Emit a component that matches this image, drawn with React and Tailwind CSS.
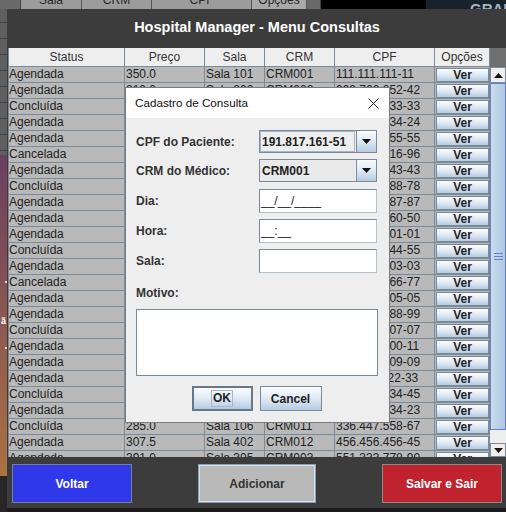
import React from "react";

const rows = [
  ["Agendada", "350.0", "Sala 101", "CRM001", "111.111.111-11"],
  ["Agendada", "210.0", "Sala 202", "CRM002", "999.760.252-42"],
  ["Concluída", "420.0", "Sala 303", "CRM003", "333.333.333-33"],
  ["Agendada", "180.0", "Sala 104", "CRM004", "424.434.434-24"],
  ["Agendada", "250.0", "Sala 205", "CRM005", "555.555.555-55"],
  ["Cancelada", "300.0", "Sala 306", "CRM006", "616.616.616-96"],
  ["Agendada", "275.0", "Sala 107", "CRM007", "343.343.343-43"],
  ["Concluída", "320.0", "Sala 208", "CRM008", "878.888.888-78"],
  ["Agendada", "290.0", "Sala 309", "CRM009", "787.787.787-87"],
  ["Agendada", "310.0", "Sala 110", "CRM010", "050.060.060-50"],
  ["Agendada", "225.0", "Sala 211", "CRM001", "101.101.101-01"],
  ["Concluída", "340.0", "Sala 312", "CRM002", "444.444.444-55"],
  ["Agendada", "199.9", "Sala 113", "CRM003", "303.303.303-03"],
  ["Cancelada", "260.0", "Sala 214", "CRM004", "666.666.666-77"],
  ["Agendada", "330.0", "Sala 315", "CRM005", "505.505.505-05"],
  ["Agendada", "280.0", "Sala 116", "CRM006", "888.888.888-99"],
  ["Concluída", "360.0", "Sala 217", "CRM007", "707.707.707-07"],
  ["Agendada", "240.0", "Sala 318", "CRM008", "100.000.000-11"],
  ["Agendada", "315.0", "Sala 119", "CRM009", "909.909.909-09"],
  ["Agendada", "295.0", "Sala 220", "CRM010", "111.222.222-33"],
  ["Concluída", "270.0", "Sala 321", "CRM011", "223.334.334-45"],
  ["Agendada", "305.0", "Sala 122", "CRM012", "123.234.234-23"],
  ["Concluída", "285.0", "Sala 106", "CRM011", "336.447.558-67"],
  ["Agendada", "307.5", "Sala 402", "CRM012", "456.456.456-45"],
  ["Agendada", "391.0", "Sala 305", "CRM003", "551.333.778-90"],
];

function Caret() {
  return (
    <svg width="9" height="5" viewBox="0 0 9 5">
      <path d="M0 0H9L4.5 5Z" fill="#111" />
    </svg>
  );
}

function CaretUp() {
  return (
    <svg width="9" height="5" viewBox="0 0 9 5">
      <path d="M0 5H9L4.5 0Z" fill="#111" />
    </svg>
  );
}

function TableRow({ r }) {
  return (
    <div className="grid grid-cols-[117px_80px_60px_70px_100px_55px] h-[16px] shrink-0 bg-[#b9b9b9] text-[12px] leading-[15px] text-[#222]">
      <div className="border-l border-r border-b border-[#7a8a99] overflow-hidden whitespace-nowrap">{r[0]}</div>
      <div className="border-r border-b border-[#7a8a99] pl-[1px] overflow-hidden whitespace-nowrap">{r[1]}</div>
      <div className="border-r border-b border-[#7a8a99] pl-[1px] overflow-hidden whitespace-nowrap">{r[2]}</div>
      <div className="border-r border-b border-[#7a8a99] pl-[1px] overflow-hidden whitespace-nowrap">{r[3]}</div>
      <div className="border-r border-b border-[#7a8a99] pl-[1px] overflow-hidden whitespace-nowrap">{r[4]}</div>
      <div className="border-r border-b border-[#7a8a99] pl-[1px] pt-[1px]">
        <div className="h-[14px] border border-[#7a8a99] bg-linear-to-b from-[#fbfdff] via-[#dfe9f4] to-[#b5cbe1] text-center font-bold text-[12px] leading-[12px] text-[#222]">
          Ver
        </div>
      </div>
    </div>
  );
}

function Table() {
  const heads = ["Status", "Preço", "Sala", "CRM", "CPF", "Opções"];
  return (
    <div className="flex h-[409px] mx-[1px] shrink-0 overflow-hidden">
      <div className="w-[482px] flex flex-col overflow-hidden">
        <div className="grid grid-cols-[117px_80px_60px_70px_100px_55px] h-[19px] shrink-0 bg-[#eeeeee] text-[12px] text-[#333]">
          {heads.map((h, i) => (
            <div
              key={h}
              className={
                i === 0
                  ? "border-l border-r border-b border-[#7a8a99] flex items-center justify-center"
                  : "border-r border-b border-[#7a8a99] flex items-center justify-center"
              }
            >
              {h}
            </div>
          ))}
        </div>
        {rows.map((r, i) => (
          <TableRow key={i} r={r} />
        ))}
      </div>
      <div className="w-[16px] flex flex-col shrink-0">
        <div className="h-[19px] bg-[#6f6f6f]" />
        <div className="h-[16px] border border-[#7a8a99] bg-[#eeeeee] flex items-center justify-center">
          <CaretUp />
        </div>
        <div className="h-[347px] border border-[#6382bf] bg-linear-to-r from-[#cddcee] to-[#aec6e0] flex items-center justify-center">
          <div className="flex flex-col gap-[2px]">
            <div className="w-[9px] h-[1px] bg-[#6382bf]" />
            <div className="w-[9px] h-[1px] bg-[#6382bf]" />
            <div className="w-[9px] h-[1px] bg-[#6382bf]" />
          </div>
        </div>
        <div className="h-[13px] bg-[#eeeeee]" />
        <div className="h-[14px] border border-[#7a8a99] bg-[#eeeeee] flex items-center justify-center">
          <Caret />
        </div>
      </div>
    </div>
  );
}

function Combo({ value, focused }) {
  return (
    <div className="w-[118px] h-[23px] border border-[#7a8a99] bg-[#eeeeee] flex">
      <div
        className={
          focused
            ? "flex-1 border border-[#a3b8cc] bg-[#eeeeee] pl-[1px] flex items-center font-bold text-[12px] text-[#222]"
            : "flex-1 bg-[#e9e9e9] pl-[2px] flex items-center font-bold text-[12px] text-[#222]"
        }
      >
        {value}
      </div>
      <div className="w-[20px] ml-[1px] border-l border-[#7a8a99] bg-linear-to-b from-[#fbfdff] via-[#dfe9f4] to-[#b5cbe1] flex items-center justify-center">
        <Caret />
      </div>
    </div>
  );
}

function Field({ value }) {
  return (
    <div className="w-[118px] h-[24px] border border-t-[#7a8a99] border-l-[#7a8a99] border-r-[#b4c0cc] border-b-[#b4c0cc] bg-white pl-[1px] flex items-center text-[12px] text-[#222] whitespace-pre">
      {value}
    </div>
  );
}

function FormRow({ label, children }) {
  return (
    <div className="flex items-center">
      <div className="w-[123px] font-bold text-[12px] text-[#333]">{label}</div>
      {children}
    </div>
  );
}

function Dialog() {
  return (
    <div className="absolute left-[125px] top-[87px] w-[265px] h-[336px] border border-[#7a7a7a] bg-[#eeeeee] flex flex-col">
      <div className="h-[30px] bg-white flex items-center justify-between pl-[9px] pr-[10px] shrink-0">
        <span className="text-[11.7px] text-[#111]">Cadastro de Consulta</span>
        <svg width="11" height="11" viewBox="0 0 11 11">
          <path d="M0.5 0.5L10.5 10.5M10.5 0.5L0.5 10.5" stroke="#222" strokeWidth="1" />
        </svg>
      </div>
      <div className="flex flex-col pl-[10px] pt-[12px]">
        <div className="flex flex-col gap-[6px]">
          <FormRow label="CPF do Paciente:">
            <Combo value="191.817.161-51" focused />
          </FormRow>
          <FormRow label="CRM do Médico:">
            <div className="h-[24px] flex items-stretch">
              <Combo value="CRM001" />
            </div>
          </FormRow>
          <FormRow label="Dia:">
            <Field value="__/__/____" />
          </FormRow>
          <FormRow label="Hora:">
            <Field value="__:__" />
          </FormRow>
          <FormRow label="Sala:">
            <Field value="" />
          </FormRow>
        </div>
        <div className="mt-[12px] h-[16px] leading-[16px] font-bold text-[12px] text-[#333]">Motivo:</div>
        <div className="mt-[8px] w-[242px] h-[67px] border border-[#7a8a99] bg-white" />
        <div className="mt-[10px] flex justify-center gap-[7px] pr-[12px]">
          <div className="w-[61px] h-[25px] border-2 border-[#66778a] bg-linear-to-b from-[#fbfdff] via-[#dfe9f4] to-[#b5cbe1] flex items-center justify-center">
            <span className="border border-[#a3b8cc] px-[1px] leading-[15px] font-bold text-[12px] text-[#222]">OK</span>
          </div>
          <div className="w-[62px] h-[25px] border border-[#7a8a99] bg-linear-to-b from-[#fbfdff] via-[#dfe9f4] to-[#b5cbe1] flex items-center justify-center font-bold text-[12px] text-[#222]">
            Cancel
          </div>
        </div>
      </div>
    </div>
  );
}

function LeftStrip() {
  const lines = [0, 1, 2, 3, 4, 5, 6, 7, 8];
  return (
    <div className="w-[7px] shrink-0 flex flex-col">
      <div className="h-[146px] bg-[#5f5f5f] flex flex-col overflow-hidden">
        <div className="h-[14px] shrink-0 border-b border-[#444]" />
        {lines.map((l) => (
          <div key={l} className="h-[16px] shrink-0 border-b border-[#444]" />
        ))}
      </div>
      <div className="h-[321px] bg-linear-to-b from-[#6b3f5f] via-[#8a5752] to-[#a9733f] flex flex-col items-end">
        <div className="mt-[126px] w-[2px] h-[2px] bg-[#ddd]" />
        <div className="mt-[34px] text-[9px] leading-[9px] text-white font-bold pr-[1px]">ã</div>
        <div className="mt-[21px] w-[2px] h-[2px] bg-[#ddd]" />
      </div>
      <div className="flex-1 bg-[#262626]" />
    </div>
  );
}

export default function App() {
  return (
    <div className="w-[506px] h-[512px] overflow-hidden bg-[#1c1c1c] relative font-['Liberation_Sans',Arial,sans-serif] flex flex-col">
      <div className="h-[9px] flex shrink-0 overflow-hidden">
        <div className="w-[321px] shrink-0 h-[9px] overflow-hidden bg-[#6a6a6a]">
          <div className="flex h-[19px] -mt-[10px] text-[12px] text-[#2a2a2a]">
            <div className="w-[21px] shrink-0 border-r border-[#444]" />
            <div className="w-[61px] shrink-0 bg-[#9c9c9c] border-r border-[#555] flex items-center justify-center">Sala</div>
            <div className="w-[70px] shrink-0 bg-[#9c9c9c] border-r border-[#555] flex items-center justify-center">CRM</div>
            <div className="w-[100px] shrink-0 bg-[#9c9c9c] border-r border-[#555] flex items-center justify-center">CPF</div>
            <div className="w-[55px] shrink-0 bg-[#a9a9a9] border-r border-[#555] flex items-center justify-center">Opções</div>
            <div className="w-[14px] shrink-0 border-r border-[#444]" />
          </div>
        </div>
        <div className="w-[105px] shrink-0 bg-black" />
        <div className="flex-1 bg-[#17222d] pl-[44px] pt-[1px] text-[15px] leading-[15px] font-bold text-[#a9b3bd] whitespace-nowrap overflow-hidden">
          GRAFICOS
        </div>
      </div>
      <div className="flex flex-1 min-h-0">
        <LeftStrip />
        <div className="w-[500px] h-[499px] shrink-0 bg-[#3c3c3c] flex flex-col">
          <div className="h-[39px] shrink-0 flex items-center justify-center pb-[2px] text-white font-bold text-[14.5px]">
            Hospital Manager - Menu Consultas
          </div>
          <Table />
          <div className="flex-1 flex justify-between px-[5px] pt-[7px] pb-[5px]">
            <div className="w-[120px] h-[39px] border border-[#7c7f93] bg-[#3039e9] flex items-center justify-center text-white font-bold text-[12px]">
              Voltar
            </div>
            <div className="w-[118px] h-[39px] border border-[#8ba1b9] shadow-[inset_0_0_0_1px_#d6e0ea] bg-[#b9b9b9] flex items-center justify-center text-[#333] font-bold text-[12px]">
              Adicionar
            </div>
            <div className="w-[120px] h-[39px] border border-[#8a8a8a] bg-[#c0222e] flex items-center justify-center text-white font-bold text-[12px]">
              Salvar e Sair
            </div>
          </div>
        </div>
      </div>
      <Dialog />
    </div>
  );
}
